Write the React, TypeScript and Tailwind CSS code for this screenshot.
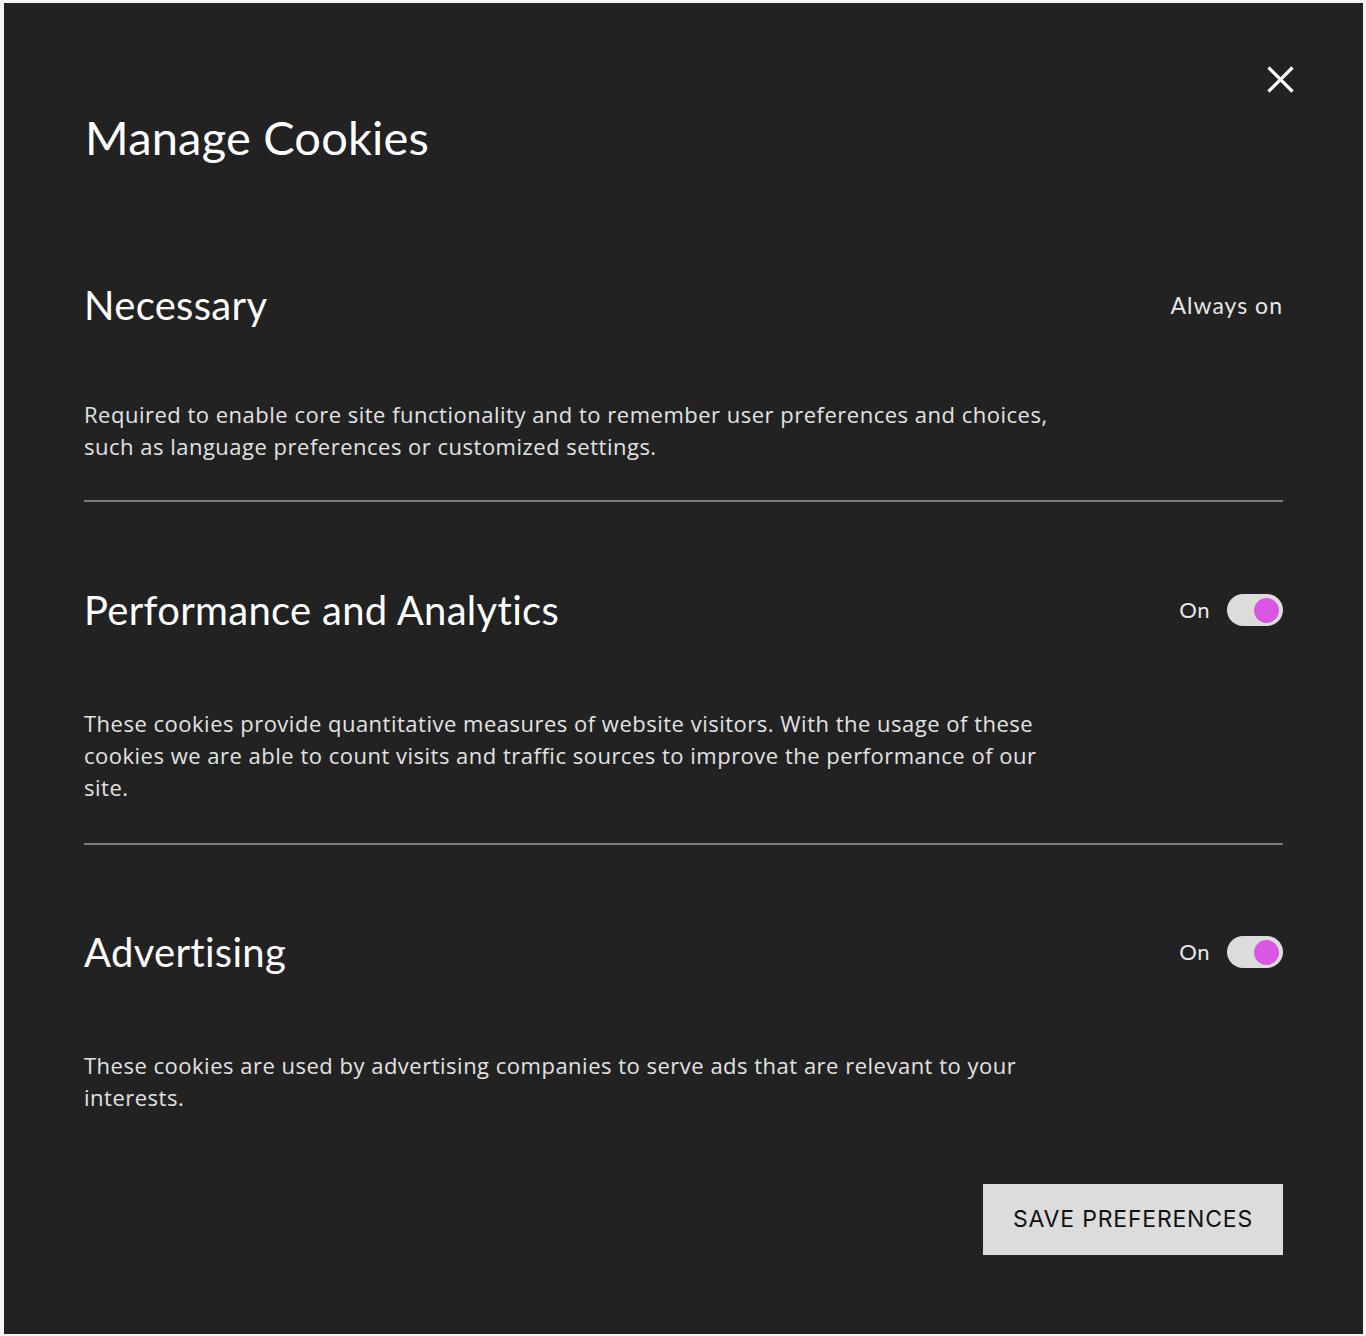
import React from "react";

function Toggle() {
  return (
    <div className="flex items-center gap-[17px]">
      <span className="text-[22px] leading-[32px] text-[#e8e8e8] tracking-[0.5px]">On</span>
      <div className="w-[56px] h-[32px] rounded-full bg-[#dcdcdc] flex items-center justify-end px-[4px]">
        <div className="w-[25px] h-[25px] rounded-full bg-[#d957e3]" />
      </div>
    </div>
  );
}

const heading = "text-[40px] leading-[44px] text-white tracking-[0.3px]";
const body = "text-[22px] leading-[32px] text-[#e2e2e2] tracking-[0.5px]";

export default function App() {
  const font = { fontFamily: "Lato, 'Noto Sans', sans-serif" };
  const bodyFont = { fontFamily: "'Open Sans', 'Noto Sans', sans-serif" };
  return (
    <div className="min-h-[1336px] w-[1366px] bg-[#f4f4f4] pt-[3px] pl-[4px]">
      <div className="relative w-[1359px] h-[1331px] bg-[#222222] px-[80px] pt-[108px]" style={font}>
        <button className="absolute top-[60px] right-[67px] w-[32px] h-[32px] flex items-center justify-center">
          <svg width="27" height="27" viewBox="0 0 27 27" fill="none">
            <path d="M1.5 1.5L25.5 25.5M25.5 1.5L1.5 25.5" stroke="white" strokeWidth="3.2" strokeLinecap="butt" />
          </svg>
        </button>
        <h1 className="text-[47px] leading-[52px] text-white ml-[1px] tracking-[0.2px]">Manage Cookies</h1>

        <div className="mt-[120px]">
          <div className="flex items-center justify-between">
            <h2 className={heading}>Necessary</h2>
            <span className="text-[23px] leading-[32px] text-[#e8e8e8] tracking-[1px]">Always on</span>
          </div>
          <p className={`${body} mt-[71px]`} style={bodyFont}>
            Required to enable core site functionality and to remember user preferences and choices,
            <br />
            such as language preferences or customized settings.
          </p>
          <div className="mt-[38px] h-[2px] bg-[#7a7a7a]" />
        </div>

        <div className="mt-[86px]">
          <div className="flex items-center justify-between">
            <h2 className={heading}>Performance and Analytics</h2>
            <Toggle />
          </div>
          <p className={`${body} mt-[75px]`} style={bodyFont}>
            These cookies provide quantitative measures of website visitors. With the usage of these
            <br />
            cookies we are able to count visits and traffic sources to improve the performance of our
            <br />
            site.
          </p>
          <div className="mt-[40px] h-[2px] bg-[#7a7a7a]" />
        </div>

        <div className="mt-[85px]">
          <div className="flex items-center justify-between">
            <h2 className={heading}>Advertising</h2>
            <Toggle />
          </div>
          <p className={`${body} mt-[75px]`} style={bodyFont}>
            These cookies are used by advertising companies to serve ads that are relevant to your
            <br />
            interests.
          </p>
        </div>

        <div className="mt-[71px] flex justify-end">
          <button
            className="w-[300px] h-[71px] bg-[#dcdcdc] text-[#111] text-[23px] tracking-[0.8px]"
            style={{ fontFamily: "Inter, 'Liberation Sans', sans-serif" }}
          >
            SAVE PREFERENCES
          </button>
        </div>
      </div>
    </div>
  );
}
